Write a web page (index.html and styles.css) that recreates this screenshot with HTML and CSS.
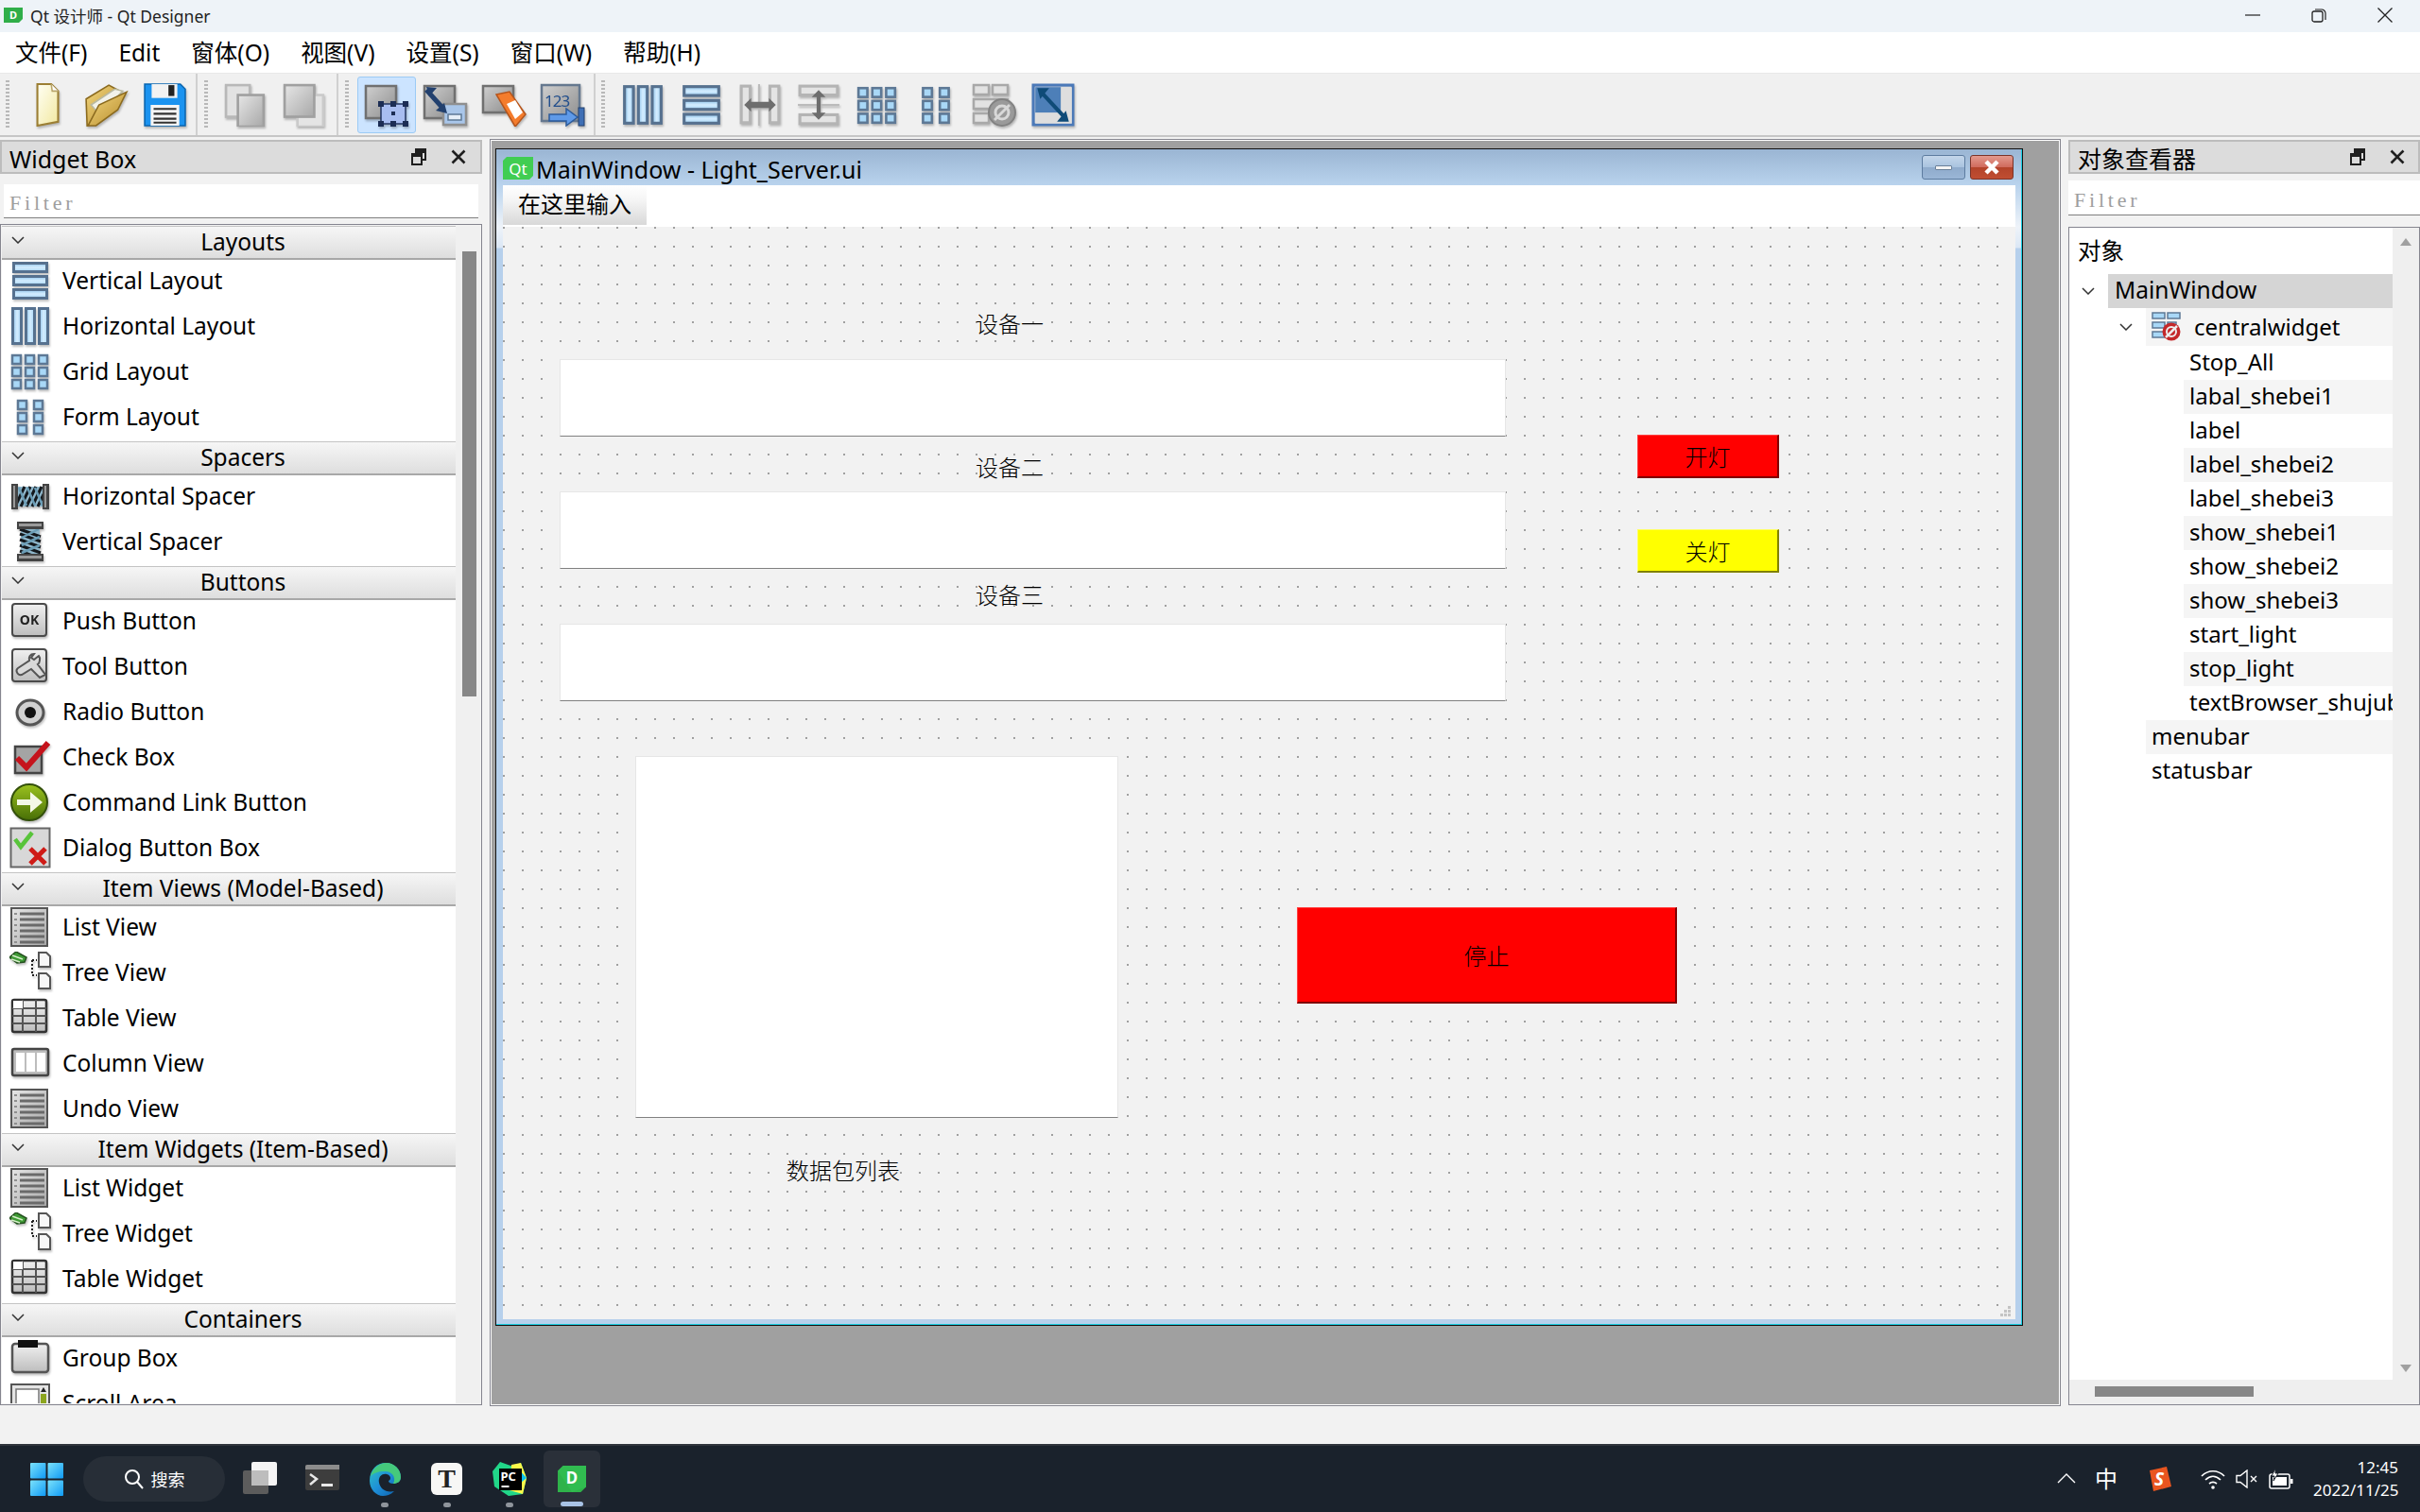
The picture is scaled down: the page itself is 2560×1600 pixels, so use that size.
FILE: index.html
```html
<!DOCTYPE html>
<html lang="zh-CN">
<head>
  <meta charset="UTF-8">
  <title>Qt 设计师 - Qt Designer</title>
  <link rel="stylesheet" href="styles.css">
</head>
<body>
  <svg class="defs" xmlns="http://www.w3.org/2000/svg">
    <defs>
      <linearGradient id="lb" x1="0" y1="0" x2="0" y2="1"><stop offset="0" stop-color="#8fc3ea"/><stop offset=".5" stop-color="#d4edff"/><stop offset="1" stop-color="#a6d4f5"/></linearGradient>
      <linearGradient id="lbh" x1="0" y1="0" x2="1" y2="0"><stop offset="0" stop-color="#8fc3ea"/><stop offset=".5" stop-color="#d4edff"/><stop offset="1" stop-color="#a6d4f5"/></linearGradient>
      <linearGradient id="gr" x1="0" y1="0" x2="0" y2="1"><stop offset="0" stop-color="#f0f0f0"/><stop offset="1" stop-color="#bdbdbd"/></linearGradient>
      <linearGradient id="gd" x1="0" y1="0" x2="1" y2="1"><stop offset="0" stop-color="#cfcfcf"/><stop offset="1" stop-color="#8d8d8d"/></linearGradient>
      <linearGradient id="lg" x1="0" y1="0" x2="1" y2="1"><stop offset="0" stop-color="#e6e6e6"/><stop offset="1" stop-color="#a8a8a8"/></linearGradient>
      <linearGradient id="cream" x1="0" y1="0" x2="1" y2="1"><stop offset="0" stop-color="#fffff4"/><stop offset="1" stop-color="#f2e8a0"/></linearGradient>
      <linearGradient id="fold" x1="0" y1="0" x2="1" y2="1"><stop offset="0" stop-color="#f3d77f"/><stop offset="1" stop-color="#b78c2c"/></linearGradient>
      <linearGradient id="ball" x1="0" y1="0" x2="0" y2="1"><stop offset="0" stop-color="#9bc21f"/><stop offset="1" stop-color="#486f06"/></linearGradient>
      <linearGradient id="edge" x1="0" y1="0" x2="1" y2="1"><stop offset="0" stop-color="#2fc6c0"/><stop offset=".5" stop-color="#1e8fd8"/><stop offset="1" stop-color="#0b5aa8"/></linearGradient>
      <linearGradient id="win" x1="0" y1="0" x2="1" y2="1"><stop offset="0" stop-color="#7be2fb"/><stop offset="1" stop-color="#0f9af5"/></linearGradient>

      <symbol id="i-vbox" viewBox="0 0 44 44">
        <g fill="url(#lb)" stroke="#56718f" stroke-width="3"><rect x="4.500" y="3.500" width="35" height="9"/><rect x="4.500" y="17.500" width="35" height="9"/><rect x="4.500" y="31.500" width="35" height="9"/></g>
      </symbol>
      <symbol id="i-hbox" viewBox="0 0 44 44">
        <g fill="url(#lbh)" stroke="#56718f" stroke-width="3"><rect x="3.500" y="3.500" width="9" height="37"/><rect x="17.500" y="3.500" width="9" height="37"/><rect x="31.500" y="3.500" width="9" height="37"/></g>
      </symbol>
      <symbol id="i-grid" viewBox="0 0 44 44">
        <g fill="#a9d8f7" stroke="#5d7895" stroke-width="2.500">
          <rect x="3" y="5" width="9" height="9"/><rect x="17" y="5" width="9" height="9"/><rect x="31" y="5" width="9" height="9"/>
          <rect x="3" y="18" width="9" height="9"/><rect x="17" y="18" width="9" height="9"/><rect x="31" y="18" width="9" height="9"/>
          <rect x="3" y="31" width="9" height="9"/><rect x="17" y="31" width="9" height="9"/><rect x="31" y="31" width="9" height="9"/>
        </g>
      </symbol>
      <symbol id="i-form" viewBox="0 0 44 44">
        <g fill="#a9d8f7" stroke="#5d7895" stroke-width="2.500">
          <rect x="9" y="5" width="9" height="9"/><rect x="26" y="5" width="9" height="9"/>
          <rect x="9" y="18" width="9" height="9"/><rect x="26" y="18" width="9" height="9"/>
          <rect x="9" y="31" width="9" height="9"/><rect x="26" y="31" width="9" height="9"/>
        </g>
      </symbol>
      <symbol id="i-hspacer" viewBox="0 0 44 44">
        <rect x="9" y="12" width="26" height="21" fill="#8fb6ca"/>
        <path d="M6 33 16 12M12 33 22 12M18 33 28 12M24 33 34 12M30 33 38 16" stroke="#14181c" stroke-width="3" fill="none"/>
        <path d="M10 13 18 32M19 13 27 32M27 13 35 32" stroke="#6b9db6" stroke-width="2.500" fill="none"/>
        <rect x="2" y="9" width="7" height="27" fill="#444"/><rect x="35" y="9" width="7" height="27" fill="#444"/>
        <rect x="4" y="11" width="2" height="23" fill="#9a9a9a"/><rect x="37" y="11" width="2" height="23" fill="#9a9a9a"/>
      </symbol>
      <symbol id="i-vspacer" viewBox="0 0 44 44">
        <rect x="12" y="8" width="20" height="28" fill="#8fb6ca"/>
        <path d="M11 9 33 17M11 14 33 22M11 20 33 28M11 26 33 34M11 32 27 38" stroke="#14181c" stroke-width="3" fill="none"/>
        <path d="M31 9 13 18M32 17 13 26M32 26 13 34" stroke="#6b9db6" stroke-width="2.500" fill="none"/>
        <rect x="8" y="1" width="28" height="8" fill="#444"/><rect x="8" y="35" width="28" height="8" fill="#444"/>
        <rect x="10" y="3" width="24" height="3" fill="#9a9a9a"/><rect x="10" y="37" width="24" height="3" fill="#9a9a9a"/>
      </symbol>
      <symbol id="i-push" viewBox="0 0 44 44">
        <rect x="3" y="4" width="36" height="34" rx="3" fill="url(#gr)" stroke="#4a4a4a" stroke-width="2"/>
        <text x="21" y="26" class="ok-text">OK</text>
      </symbol>
      <symbol id="i-tool" viewBox="0 0 44 44">
        <rect x="3" y="4" width="36" height="34" rx="3" fill="url(#gr)" stroke="#4a4a4a" stroke-width="2"/>
        <path d="M26 9c-4 0-6 3-5 7L9 24c-3 2-1 8 4 7l10-6 9 9 6-3-8-11c2-1 3-7 1-9l-5 4-3-2z" fill="#d9d9d9" stroke="#555" stroke-width="2"/>
      </symbol>
      <symbol id="i-radio" viewBox="0 0 44 44">
        <ellipse cx="22" cy="23" rx="14" ry="13" fill="#d0d0d0" stroke="#555" stroke-width="3"/>
        <circle cx="22" cy="23" r="6" fill="#111"/>
      </symbol>
      <symbol id="i-check" viewBox="0 0 44 44">
        <rect x="6" y="11" width="28" height="28" fill="#a4a4a4" stroke="#444" stroke-width="2.500"/>
        <path d="M8 23 18 33 41 7" fill="none" stroke="#c5131c" stroke-width="6"/>
      </symbol>
      <symbol id="i-cmd" viewBox="0 0 44 44">
        <circle cx="21" cy="22" r="19" fill="url(#ball)" stroke="#33500a" stroke-width="2"/>
        <path d="M8 19h14v-8l13 11-13 11v-8H8z" fill="#f4f8e6"/>
      </symbol>
      <symbol id="i-dialog" viewBox="0 0 44 44">
        <rect x="1.500" y="1.500" width="41" height="41" fill="#d8d8d8" stroke="#666" stroke-width="2"/>
        <path d="M6 13l6 8L24 6" fill="none" stroke="#58c43a" stroke-width="4.500"/>
        <path d="M22 23 38 39M38 23 22 39" fill="none" stroke="#cf1b16" stroke-width="5"/>
      </symbol>
      <symbol id="i-list" viewBox="0 0 44 44">
        <rect x="2" y="2" width="38" height="40" fill="url(#lg)" stroke="#555" stroke-width="2"/>
        <path d="M11 8h26M11 14h26M11 20h26M11 26h26M11 32h26M11 38h26" stroke="#6a6a6a" stroke-width="3"/>
        <path d="M5 8h3M5 14h3M5 20h3M5 26h3M5 32h3M5 38h3" stroke="#8f8f8f" stroke-width="2"/>
      </symbol>
      <symbol id="i-tree" viewBox="0 0 44 44">
        <path d="M0 6 7 0 18 6 16 11 8 12z" fill="#3f9a35" stroke="#24501e" stroke-width="1.500"/>
        <path d="M3 4 14 8M2 8 11 11" stroke="#d5efc8" stroke-width="1.500"/>
        <path d="M24 9h5M24 9v16M24 25h5" stroke="#222" stroke-width="2" stroke-dasharray="2 2" fill="none"/>
        <path d="M31 1h8l4 4v11H31zM31 23h8l4 4v12H31z" fill="#f7f7f7" stroke="#555" stroke-width="2"/>
      </symbol>
      <symbol id="i-table" viewBox="0 0 44 44">
        <rect x="3" y="3" width="36" height="34" rx="2" fill="url(#gr)" stroke="#333" stroke-width="2.500"/>
        <path d="M3 12h36M3 20h36M3 28h36M14 3v34M28 3v34" stroke="#555" stroke-width="2"/>
        <rect x="4" y="4" width="10" height="8" fill="#fff"/>
      </symbol>
      <symbol id="i-column" viewBox="0 0 44 44">
        <rect x="3" y="7" width="38" height="28" rx="2" fill="#bdbdbd" stroke="#444" stroke-width="2.500"/>
        <path d="M7 11h9v20H7zM18 11h9v20h-9zM29 11h9v20h-9z" fill="#fff"/>
      </symbol>
      <symbol id="i-group" viewBox="0 0 44 44">
        <rect x="3" y="7" width="38" height="30" rx="3" fill="url(#gr)" stroke="#555" stroke-width="2.500"/>
        <rect x="9" y="3" width="21" height="8" fill="#111"/>
      </symbol>
      <symbol id="i-scroll" viewBox="0 0 44 44">
        <rect x="2" y="2" width="40" height="40" fill="#e4e4e4" stroke="#555" stroke-width="2"/>
        <rect x="7" y="7" width="24" height="37" fill="#fff" stroke="#777" stroke-width="1.500"/>
        <rect x="33" y="12" width="6" height="30" fill="#8ca51f"/>
        <path d="M36 5 39 10H33z" fill="#222"/>
      </symbol>

      <symbol id="t-new" viewBox="0 0 44 44">
        <path d="M12 1h14l7 7v31l-21 4z" fill="url(#cream)" stroke="#9c7f34" stroke-width="2"/>
        <path d="M26 1l1 7h6" fill="#fff" stroke="#b9a56a" stroke-width="1.500"/>
      </symbol>
      <symbol id="t-open" viewBox="0 0 44 44">
        <path d="M2 16 25 2l11 6L14 40 3 43z" fill="url(#fold)" stroke="#8b6a1e" stroke-width="1.500"/>
        <path d="M7 22 31 6l8 2-23 24z" fill="#f2f2ea" stroke="#b9b9a0" stroke-width="1.500"/>
        <path d="M4 43 15 22 43 9 34 27 12 43z" fill="url(#fold)" stroke="#8b6a1e" stroke-width="1.500"/>
      </symbol>
      <symbol id="t-save" viewBox="0 0 44 44">
        <path d="M2 1h36l5 5v37H2z" fill="#1b93f0" stroke="#0a66b0" stroke-width="1.500"/>
        <rect x="9" y="1" width="26" height="14" fill="#f2f2f2"/><rect x="26" y="2" width="6" height="11" fill="#222"/>
        <rect x="8" y="22" width="29" height="21" fill="#f5f5f5"/>
        <path d="M11 26h23M11 31h23M11 36h23M11 40h23" stroke="#333" stroke-width="2"/>
      </symbol>
      <symbol id="t-copy" viewBox="0 0 44 44">
        <rect x="2" y="2" width="24" height="32" fill="#e2e2e2" stroke="#b8b8b8" stroke-width="2.500"/>
        <rect x="14" y="12" width="26" height="32" fill="url(#lg)" stroke="#a0a0a0" stroke-width="2.500"/>
      </symbol>
      <symbol id="t-paste" viewBox="0 0 44 44">
        <rect x="15" y="12" width="26" height="32" fill="#e4e4e4" stroke="#cacaca" stroke-width="2.500"/>
        <rect x="2" y="2" width="30" height="32" fill="url(#lg)" stroke="#a0a0a0" stroke-width="2.500"/>
      </symbol>
      <symbol id="t-edit" viewBox="0 0 48 46">
        <rect x="2" y="3" width="32" height="34" fill="url(#gd)" stroke="#707070" stroke-width="2.500"/>
        <rect x="18" y="22" width="26" height="21" fill="#a8bdf0" stroke="#22355f" stroke-width="1.500"/>
        <g fill="#1c2d54"><rect x="15" y="19" width="6" height="6"/><rect x="41" y="19" width="6" height="6"/><rect x="15" y="40" width="6" height="6"/><rect x="41" y="40" width="6" height="6"/><rect x="28" y="19" width="6" height="6"/><rect x="28" y="40" width="6" height="6"/><rect x="29" y="30" width="4" height="4"/></g>
      </symbol>
      <symbol id="t-signal" viewBox="0 0 48 46">
        <rect x="2" y="3" width="32" height="34" fill="url(#gd)" stroke="#707070" stroke-width="2.500"/>
        <rect x="22" y="22" width="24" height="22" fill="#a9c6ea" stroke="#8f8f8f" stroke-width="2.500"/>
        <rect x="27" y="33" width="14" height="6" fill="#e6eef8" stroke="#5d7895" stroke-width="1.500"/>
        <path d="M4 7 22 27" stroke="#22406e" stroke-width="5"/>
        <path d="M4 4l11 1-8 9zM26 32 14 29l9-8z" fill="#22406e"/>
      </symbol>
      <symbol id="t-buddy" viewBox="0 0 48 46">
        <rect x="2" y="3" width="32" height="28" fill="url(#gd)" stroke="#707070" stroke-width="2.500"/>
        <path d="M16 12 30 9l17 24-11 13z" fill="#f47c2c" stroke="#b5551c" stroke-width="1.500"/>
        <path d="M27 22l9-4 8 13-8 7z" fill="#fff"/>
      </symbol>
      <symbol id="t-tab" viewBox="0 0 48 46">
        <rect x="2" y="2" width="40" height="38" fill="url(#gd)" stroke="#65788f" stroke-width="2.500"/>
        <text x="5" y="25" class="tab-text">123</text>
        <path d="M10 33h18v-6l12 9-12 9v-5H10z" fill="#5f9ae8" stroke="#2d5b9a" stroke-width="1.500"/>
        <rect x="41" y="26" width="6" height="19" fill="#3f6fb5" stroke="#22406e"/>
      </symbol>
      <symbol id="t-hsplit" viewBox="0 0 44 44">
        <g fill="#e4e4e4" stroke="#b4b4b4" stroke-width="3"><rect x="3" y="3" width="9" height="37"/><rect x="32" y="3" width="9" height="37"/></g>
        <rect x="20" y="1" width="2" height="42" fill="#bbb"/>
        <path d="M6 22 13 15v4h18v-4l7 7-7 7v-4H13v4z" fill="#6d6d6d"/>
      </symbol>
      <symbol id="t-vsplit" viewBox="0 0 44 44">
        <g fill="#e4e4e4" stroke="#b4b4b4" stroke-width="3"><rect x="3" y="3" width="38" height="9"/><rect x="3" y="32" width="38" height="9"/></g>
        <rect x="1" y="21" width="42" height="2" fill="#bbb"/>
        <path d="M22 7l7 7h-5v16h5l-7 7-7-7h5V14h-5z" fill="#6d6d6d"/>
      </symbol>
      <symbol id="t-break" viewBox="0 0 48 46">
        <g fill="#e2e2e2" stroke="#a8a8a8" stroke-width="2.500"><rect x="2" y="2" width="16" height="10"/><rect x="22" y="2" width="16" height="10"/><rect x="2" y="17" width="36" height="10"/><rect x="2" y="32" width="16" height="10"/></g>
        <circle cx="32" cy="31" r="14" fill="#9a9a9a" stroke="#828282" stroke-width="2"/>
        <path d="M24 39 40 23" stroke="#d8d8d8" stroke-width="3"/><circle cx="32" cy="31" r="7" fill="none" stroke="#d8d8d8" stroke-width="3"/>
      </symbol>
      <symbol id="t-adjust" viewBox="0 0 44 44">
        <rect x="2" y="2" width="40" height="40" fill="#dcdcdc" stroke="#4b79b8" stroke-width="3"/>
        <path d="M4 4h26v26H4z" fill="#4d7fb8"/>
        <path d="M4 30h26V4h11v37H4z" fill="#dedede"/>
        <path d="M9 8 35 36" stroke="#0f4b78" stroke-width="4"/>
        <path d="M6 5h12l-9 11zM38 39H26l9-11z" fill="#0f4b78"/>
      </symbol>

      <symbol id="s-float" viewBox="0 0 16 18">
        <path d="M5 5V1h10v11h-4" fill="none" stroke="#1f1f1f" stroke-width="2"/><path d="M5 2h10v3H5z" fill="#1f1f1f"/>
        <rect x="1" y="6" width="10" height="11" fill="none" stroke="#1f1f1f" stroke-width="2"/><path d="M1 6h10v3H1z" fill="#1f1f1f"/>
      </symbol>
      <symbol id="s-close" viewBox="0 0 16 16"><path d="M1.500 1.500 14.500 14.500M14.500 1.500 1.500 14.500" stroke="#1f1f1f" stroke-width="2.600"/></symbol>
      <symbol id="s-chev" viewBox="0 0 14 8"><path d="M1 1 7 7 13 1" fill="none" stroke="#333" stroke-width="1.500"/></symbol>
    </defs>
  </svg>

  <div class="app">
    <div class="titlebar">
      <svg class="title-icon" viewBox="0 0 20 16"><path d="M0 0h20v12l-4 4H0z" fill="#2fae49"/><text x="10" y="12" class="d-text">D</text></svg>
      <span class="title-text">Qt 设计师 - Qt Designer</span>
      <div class="win-ctrls">
        <svg class="win-ctrl" viewBox="0 0 16 16"><path d="M0 8h16" stroke="#222" stroke-width="1.200"/></svg>
        <svg class="win-ctrl" viewBox="0 0 16 16"><rect x="1" y="4" width="11" height="11" rx="2" fill="none" stroke="#222" stroke-width="1.300"/><path d="M4 2h7c2 0 4 2 4 4v7" fill="none" stroke="#222" stroke-width="1.200"/></svg>
        <svg class="win-ctrl" viewBox="0 0 16 16"><path d="M0.500 0.500 15.500 15.500M15.500 0.500 0.500 15.500" stroke="#222" stroke-width="1.300"/></svg>
      </div>
    </div>

    <nav class="menubar">
      <span>文件(F)</span><span>Edit</span><span>窗体(O)</span><span>视图(V)</span><span>设置(S)</span><span>窗口(W)</span><span>帮助(H)</span>
    </nav>

    <div class="toolbar">
      <div class="tool-group g1">
        <i class="grip"></i>
        <div class="tool"><svg class="ic tb"><use href="#t-new"/></svg></div>
        <div class="tool"><svg class="ic tb"><use href="#t-open"/></svg></div>
        <div class="tool"><svg class="ic tb"><use href="#t-save"/></svg></div>
      </div>
      <div class="tool-group g2">
        <i class="grip"></i>
        <div class="tool"><svg class="ic tb"><use href="#t-copy"/></svg></div>
        <div class="tool"><svg class="ic tb"><use href="#t-paste"/></svg></div>
      </div>
      <div class="tool-group g3">
        <i class="grip"></i>
        <div class="tool active"><svg class="ic tb"><use href="#t-edit"/></svg></div>
        <div class="tool"><svg class="ic tb"><use href="#t-signal"/></svg></div>
        <div class="tool"><svg class="ic tb"><use href="#t-buddy"/></svg></div>
        <div class="tool"><svg class="ic tb"><use href="#t-tab"/></svg></div>
      </div>
      <div class="tool-group g4">
        <i class="grip"></i>
        <div class="tool"><svg class="ic tb"><use href="#i-hbox"/></svg></div>
        <div class="tool"><svg class="ic tb"><use href="#i-vbox"/></svg></div>
        <div class="tool"><svg class="ic tb"><use href="#t-hsplit"/></svg></div>
        <div class="tool"><svg class="ic tb"><use href="#t-vsplit"/></svg></div>
        <div class="tool"><svg class="ic tb"><use href="#i-grid"/></svg></div>
        <div class="tool"><svg class="ic tb"><use href="#i-form"/></svg></div>
        <div class="tool"><svg class="ic tb"><use href="#t-break"/></svg></div>
        <div class="tool"><svg class="ic tb"><use href="#t-adjust"/></svg></div>
      </div>
    </div>

    <div class="workspace">
      <!-- Widget Box -->
      <aside class="dock dock-left">
        <div class="dock-title">
          <span>Widget Box</span>
          <svg class="dock-btn"><use href="#s-float"/></svg>
          <svg class="dock-btn last"><use href="#s-close"/></svg>
        </div>
        <div class="filter left-filter">Filter</div>
        <div class="box-frame">
          <div class="box-list">
            <div class="cat"><svg class="chev"><use href="#s-chev"/></svg><span>Layouts</span></div>
            <div class="item"><svg class="ic"><use href="#i-vbox"/></svg>Vertical Layout</div>
            <div class="item"><svg class="ic"><use href="#i-hbox"/></svg>Horizontal Layout</div>
            <div class="item"><svg class="ic"><use href="#i-grid"/></svg>Grid Layout</div>
            <div class="item"><svg class="ic"><use href="#i-form"/></svg>Form Layout</div>
            <div class="cat"><svg class="chev"><use href="#s-chev"/></svg><span>Spacers</span></div>
            <div class="item"><svg class="ic"><use href="#i-hspacer"/></svg>Horizontal Spacer</div>
            <div class="item"><svg class="ic"><use href="#i-vspacer"/></svg>Vertical Spacer</div>
            <div class="cat"><svg class="chev"><use href="#s-chev"/></svg><span>Buttons</span></div>
            <div class="item"><svg class="ic"><use href="#i-push"/></svg>Push Button</div>
            <div class="item"><svg class="ic"><use href="#i-tool"/></svg>Tool Button</div>
            <div class="item"><svg class="ic"><use href="#i-radio"/></svg>Radio Button</div>
            <div class="item"><svg class="ic"><use href="#i-check"/></svg>Check Box</div>
            <div class="item"><svg class="ic"><use href="#i-cmd"/></svg>Command Link Button</div>
            <div class="item"><svg class="ic flat"><use href="#i-dialog"/></svg>Dialog Button Box</div>
            <div class="cat"><svg class="chev"><use href="#s-chev"/></svg><span>Item Views (Model-Based)</span></div>
            <div class="item"><svg class="ic flat"><use href="#i-list"/></svg>List View</div>
            <div class="item"><svg class="ic"><use href="#i-tree"/></svg>Tree View</div>
            <div class="item"><svg class="ic"><use href="#i-table"/></svg>Table View</div>
            <div class="item"><svg class="ic"><use href="#i-column"/></svg>Column View</div>
            <div class="item"><svg class="ic flat"><use href="#i-list"/></svg>Undo View</div>
            <div class="cat"><svg class="chev"><use href="#s-chev"/></svg><span>Item Widgets (Item-Based)</span></div>
            <div class="item"><svg class="ic flat"><use href="#i-list"/></svg>List Widget</div>
            <div class="item"><svg class="ic"><use href="#i-tree"/></svg>Tree Widget</div>
            <div class="item"><svg class="ic"><use href="#i-table"/></svg>Table Widget</div>
            <div class="cat"><svg class="chev"><use href="#s-chev"/></svg><span>Containers</span></div>
            <div class="item"><svg class="ic"><use href="#i-group"/></svg>Group Box</div>
            <div class="item"><svg class="ic flat"><use href="#i-scroll"/></svg>Scroll Area</div>
          </div>
          <div class="box-scroll"><div class="box-thumb"></div></div>
        </div>
      </aside>

      <!-- MDI area with the form being edited -->
      <main class="mdi">
        <div class="subwin">
          <div class="sub-title">
            <svg class="qt-logo" viewBox="0 0 32 24"><path d="M4 0h28v20l-4 4H0V4z" fill="#41cd52"/><text x="16" y="18.500" class="qt-text">Qt</text></svg>
            <span class="sub-name">MainWindow - Light_Server.ui</span>
            <div class="sub-btn min"><i></i></div>
            <div class="sub-btn close"><svg viewBox="0 0 18 16"><path d="M3 2 15 14M15 2 3 14" stroke="#fff" stroke-width="4.500"/></svg></div>
          </div>
          <div class="sub-menu"><span>在这里输入</span></div>
          <div class="canvas">
            <span class="lbl lbl1">设备一</span>
            <div class="field f1"></div>
            <span class="lbl lbl2">设备二</span>
            <div class="field f2"></div>
            <span class="lbl lbl3">设备三</span>
            <div class="field f3"></div>
            <div class="btn red b-on">开灯</div>
            <div class="btn yellow b-off">关灯</div>
            <div class="field browser"></div>
            <div class="btn red b-stop">停止</div>
            <span class="lbl lbl4">数据包列表</span>
            <svg class="grip-corner" viewBox="0 0 12 12"><path d="M8 0h3v3H8zM4 4h3v3H4zM8 4h3v3H8zM0 8h3v3H0zM4 8h3v3H4zM8 8h3v3H8z" fill="#c4c4c4"/></svg>
          </div>
        </div>
      </main>

      <!-- Object inspector -->
      <aside class="dock dock-right">
        <div class="dock-title">
          <span class="ins-name">对象查看器</span>
          <svg class="dock-btn"><use href="#s-float"/></svg>
          <svg class="dock-btn last-r"><use href="#s-close"/></svg>
        </div>
        <div class="filter right-filter">Filter</div>
        <div class="tree-frame">
          <div class="tree-main">
            <div class="tree-rows">
              <div class="tree-head">对象</div>
              <div class="row"><div class="ind w40"><svg class="chev"><use href="#s-chev"/></svg></div><div class="cell selected">MainWindow</div></div>
              <div class="row tall"><div class="ind w80"><svg class="chev"><use href="#s-chev"/></svg></div><div class="cell alt central"><svg class="tree-ic" viewBox="0 0 32 32"><g fill="#a9d8f7" stroke="#5d7895" stroke-width="1.500"><path d="M1 1h13v6H1zM17 1h13v6H17zM1 11h13v6H1zM17 11h9v6h-9zM1 21h13v6H1z"/></g><circle cx="21" cy="21" r="9.500" fill="#c4282a"/><path d="M15 27 27 15" stroke="#eee" stroke-width="2.500"/><circle cx="21" cy="21" r="5" fill="none" stroke="#eee" stroke-width="2"/></svg>centralwidget</div></div>
              <div class="row"><div class="ind w120"></div><div class="cell">Stop_All</div></div>
              <div class="row"><div class="ind w120"></div><div class="cell alt">labal_shebei1</div></div>
              <div class="row"><div class="ind w120"></div><div class="cell">label</div></div>
              <div class="row"><div class="ind w120"></div><div class="cell alt">label_shebei2</div></div>
              <div class="row"><div class="ind w120"></div><div class="cell">label_shebei3</div></div>
              <div class="row"><div class="ind w120"></div><div class="cell alt">show_shebei1</div></div>
              <div class="row"><div class="ind w120"></div><div class="cell">show_shebei2</div></div>
              <div class="row"><div class="ind w120"></div><div class="cell alt">show_shebei3</div></div>
              <div class="row"><div class="ind w120"></div><div class="cell">start_light</div></div>
              <div class="row"><div class="ind w120"></div><div class="cell alt">stop_light</div></div>
              <div class="row"><div class="ind w120"></div><div class="cell">textBrowser_shujubao</div></div>
              <div class="row"><div class="ind w80"></div><div class="cell alt top">menubar</div></div>
              <div class="row"><div class="ind w80"></div><div class="cell top">statusbar</div></div>
            </div>
            <div class="tree-vscroll"><i class="arrow up"></i><i class="arrow down"></i></div>
          </div>
          <div class="tree-hscroll"><div class="h-thumb"></div></div>
        </div>
      </aside>
    </div>

    <footer class="taskbar">
      <svg class="start" viewBox="0 0 35 35"><g fill="url(#win)"><rect width="16.500" height="16.500" rx="1"/><rect x="18.500" width="16.500" height="16.500" rx="1"/><rect y="18.500" width="16.500" height="16.500" rx="1"/><rect x="18.500" y="18.500" width="16.500" height="16.500" rx="1"/></g></svg>
      <div class="search">
        <svg viewBox="0 0 22 22"><circle cx="9" cy="9" r="7" fill="none" stroke="#fff" stroke-width="2"/><path d="M14 14 20 21" stroke="#fff" stroke-width="2"/></svg>
        <span>搜索</span>
      </div>
      <div class="task">
        <svg viewBox="0 0 36 36"><rect x="0" y="9" width="27" height="25" rx="2" fill="#5c5c5c"/><rect x="9" y="0" width="27" height="25" rx="2" fill="#f4f4f4"/><rect x="9" y="9" width="18" height="16" fill="#bdbdbd"/></svg>
      </div>
      <div class="task">
        <svg viewBox="0 0 36 36"><rect y="3" width="36" height="27" rx="2" fill="#3d3d3d"/><path d="M0 5q0-2 2-2h34v5H0z" fill="#8c8c8c"/><path d="M5 13l7 5-7 6" fill="none" stroke="#e8e8e8" stroke-width="2.500"/><rect x="17" y="23" width="12" height="3" fill="#e8e8e8"/></svg>
      </div>
      <div class="task open">
        <svg viewBox="0 0 36 36"><path d="M2 20C2 8 10 1 19 1c9 0 16 7 16 15 0 5-4 7-8 7-3 0-5-1-5-3 3-1 3-6-2-7-6-1-9 4-8 9 1 6 7 11 16 9-4 4-8 5-12 5C9 36 2 29 2 20z" fill="url(#edge)"/><path d="M3 15C6 6 13 1 20 1c8 0 15 7 15 15 0 5-4 7-8 7 4-8-3-14-10-13-6 0-11 2-14 5z" fill="#45c97c"/></svg>
      </div>
      <div class="task open">
        <svg viewBox="0 0 36 36"><rect x="1" y="1" width="33" height="34" rx="6" fill="#f7f7f5"/><text x="17.500" y="27" class="typora-text">T</text></svg>
      </div>
      <div class="task open">
        <svg viewBox="0 0 36 36"><path d="M8 0 22 5 30 1 36 17 32 34 17 36 2 26 0 10z" fill="#21d789"/><path d="M20 3 30 1 36 17 32 34 18 30z" fill="#fcf84a"/><path d="M28 8 36 17 30 22z" fill="#07c3f2"/><rect x="7" y="7" width="24" height="23" fill="#000"/><text x="8.500" y="20" class="pc-text">PC</text><rect x="9.500" y="25" width="8" height="2" fill="#fff"/></svg>
      </div>
      <div class="task active">
        <svg viewBox="0 0 32 32"><path d="M0 8 6 2h26v24l-6 6H0z" fill="#2fb34a"/><path d="M0 8 6 2h26v24L16 32z" fill="#34c255" opacity=".6"/><text x="16" y="22" class="d2-text">D</text></svg>
      </div>
      <div class="tray">
        <svg class="tray-chev" viewBox="0 0 20 12"><path d="M1 10 10 1 19 10" fill="none" stroke="#fff" stroke-width="1.400"/></svg>
        <span class="ime">中</span>
        <svg class="sogou" viewBox="0 0 26 26"><path d="M3 4 21 0l5 21-19 5z" fill="#e9551f"/><text x="13" y="20" class="sogou-text">S</text></svg>
        <svg class="wifi" viewBox="0 0 26 22"><g fill="none" stroke="#fff" stroke-width="1.700"><path d="M1 8c7-7 17-7 24 0"/><path d="M5 12c5-5 11-5 16 0"/><path d="M9 16c3-2.500 5-2.500 8 0"/></g><circle cx="13" cy="20" r="1.800" fill="#fff"/></svg>
        <svg class="vol" viewBox="0 0 24 20"><path d="M1 6.500h4L12 1v18l-7-5.500H1z" fill="none" stroke="#fff" stroke-width="1.400"/><path d="M16 7l6 6M22 7l-6 6" stroke="#fff" stroke-width="1.400"/></svg>
        <svg class="batt" viewBox="0 0 26 22"><rect x="1" y="6" width="21" height="15" rx="2" fill="none" stroke="#fff" stroke-width="1.500"/><rect x="4" y="9" width="15" height="9" fill="#fff"/><rect x="23" y="11" width="2.500" height="5" fill="#fff"/><path d="M7 0 3 8h3l-1 5 5-8H7z" fill="#fff" stroke="#1a222c"/></svg>
        <div class="clock"><div>12:45</div><div>2022/11/25</div></div>
      </div>
    </footer>
  </div>
</body>
</html>
```

FILE: styles.css
```css
* {
  box-sizing: border-box;
}
html, body {
  margin: 0;
  padding: 0;
}
body {
  font-family: "Noto Sans", "Noto Sans CJK SC", sans-serif;
  font-size: 24.500px;
  color: #000;
  background: #f2f2f2;
}
.defs {
  display: block;
  width: 0;
  height: 0;
}
.app {
  width: 2560px;
  height: 1600px;
  display: flex;
  flex-direction: column;
  overflow: hidden;
}

/* window chrome */
.titlebar {
  height: 34px;
  flex: none;
  background: #eef3f8;
  display: flex;
  align-items: center;
  padding: 0 0 2px 4px;
}
.title-icon {
  width: 20px;
  height: 16px;
}
.d-text {
  font: bold 11px "Noto Sans", sans-serif;
  fill: #fff;
  text-anchor: middle;
}
.title-text {
  margin-left: 8px;
  font-size: 17.500px;
  color: #222;
}
.win-ctrls {
  margin-left: auto;
  display: flex;
  gap: 54px;
  padding-right: 29px;
}
.win-ctrl {
  width: 16px;
  height: 16px;
}
.menubar {
  height: 43px;
  flex: none;
  background: #fff;
  display: flex;
  align-items: center;
  gap: 33px;
  padding-left: 16px;
  line-height: 42px;
}

.toolbar {
  height: 68px;
  flex: none;
  display: flex;
  background: #f0f0f0;
  border-top: 1px solid #e8e8e8;
  border-bottom: 2px solid #c6c6c6;
}
.tool-group {
  display: flex;
  align-items: center;
  border-right: 2px solid #d0d0d0;
}
.g1 { width: 209px; }
.g2 { width: 149px; padding-left: 1px; }
.g3 { width: 272px; padding-left: 1px; }
.g4 { flex: 1; border-right: 0; }
.grip {
  width: 4px;
  height: 52px;
  margin: 0 9px 0 6px;
  background: repeating-linear-gradient(#b8b8b8 0 2px, transparent 2px 4px);
}
.tool {
  width: 62px;
  height: 60px;
  display: flex;
  align-items: center;
  justify-content: center;
  border: 1px solid transparent;
  border-radius: 3px;
}
.tool.active {
  background: #cce4ff;
  border-color: #9ccbf5;
}
.ic {
  width: 44px;
  height: 44px;
  flex: none;
  filter: drop-shadow(1px 2px 1px rgba(0, 0, 0, .25));
}
.ic.flat {
  filter: none;
}
.ic.tb {
  width: 48px;
  height: 46px;
}
.ok-text {
  font: bold 14px "Noto Sans", sans-serif;
  text-anchor: middle;
  fill: #222;
}
.tab-text {
  font: 17px "Noto Sans", sans-serif;
  fill: #234f8c;
  letter-spacing: -1px;
}

/* main area */
.workspace {
  flex: 1;
  min-height: 0;
  display: flex;
  padding: 2px 0 41px;
  background: #f2f2f2;
}
.dock {
  display: flex;
  flex-direction: column;
  flex: none;
}
.dock-left {
  width: 510px;
}
.dock-right {
  width: 372px;
  margin-left: 8px;
}
.dock-title {
  height: 36px;
  flex: none;
  margin-top: 1px;
  display: flex;
  align-items: center;
  padding-left: 8px;
  background: #dcdcdc;
  border: 2px solid #bcbcbc;
  font-size: 25px;
  line-height: 30px;
}
.dock-title span {
  flex: 1;
  padding-top: 3px;
}
.dock-btn {
  width: 16px;
  height: 18px;
  margin-right: 26px;
}
.dock-btn.last {
  margin-right: 15px;
}
.dock-btn.last-r {
  margin-right: 14px;
}
.filter {
  flex: none;
  background: #fff;
  border-bottom: 1px solid #808080;
  font-family: "Liberation Serif", serif;
  font-size: 22px;
  letter-spacing: 3.800px;
  color: #9e9e9e;
  display: flex;
  align-items: center;
  padding: 5px 0 0 6px;
}
.left-filter {
  height: 36px;
  margin: 11px 4px 0 4px;
}
.right-filter {
  height: 37px;
  margin-top: 7px;
}

/* widget box */
.box-frame {
  flex: 1;
  min-height: 0;
  margin-top: 6px;
  border: 1px solid #85858f;
  padding: 1px;
  display: flex;
  overflow: hidden;
}
.box-list {
  width: 480px;
  flex: none;
  background: #fff;
  overflow: hidden;
}
.box-scroll {
  flex: 1;
  background: #f0f0f0;
  padding: 27px 4px 0 7px;
}
.box-thumb {
  height: 471px;
  background: #878787;
}
.cat {
  height: 36px;
  display: flex;
  align-items: center;
  justify-content: center;
  position: relative;
  padding: 0 0 2px 30px;
  background: linear-gradient(#f6f6f6, #dedede);
  border-top: 1px solid #c4c4c4;
  border-bottom: 2px solid #a8a8a8;
  line-height: 31px;
}
.chev {
  width: 14px;
  height: 8px;
}
.cat .chev {
  position: absolute;
  left: 10px;
  top: 10px;
}
.item {
  height: 48px;
  display: flex;
  align-items: center;
  padding: 0 0 4px 8px;
  gap: 12px;
  line-height: 44px;
  white-space: nowrap;
}

/* mdi + sub window */
.mdi {
  flex: none;
  width: 1660px;
  margin: 1px 1px 0 9px;
  background: #a0a0a0;
  border: 1px solid #fff;
  box-shadow: 0 0 0 1px #85858f;
  position: relative;
}
.subwin {
  position: absolute;
  left: 4px;
  top: 8px;
  width: 1616px;
  height: 1246px;
  padding: 0 7px 6px;
  border: 1px solid #111;
  box-shadow: inset -1px -1px 0 #1ad0e4;
  background: linear-gradient(#9ab5d3 0, #b9d3ed 38px, #eef3f9 82px, #dbe7f5 104px, #b6d0ec 105px);
  display: flex;
  flex-direction: column;
}
.sub-title {
  height: 38px;
  flex: none;
  display: flex;
  align-items: center;
  font-size: 25px;
  line-height: 38px;
}
.qt-logo {
  width: 32px;
  height: 24px;
  margin-top: 2px;
}
.qt-text {
  font: 17px "Noto Sans", sans-serif;
  fill: #fff;
  text-anchor: middle;
}
.sub-name {
  margin-left: 3px;
  padding-top: 3px;
  flex: 1;
}
.sub-btn {
  width: 46px;
  height: 26px;
  margin: 0 2px 0 3px;
  border: 1px solid #5d7ca0;
  border-radius: 3px;
  display: flex;
  align-items: center;
  justify-content: center;
}
.sub-btn.min {
  background: linear-gradient(#c4d6ea 0, #a9c3df 50%, #8fabcc 51%, #9ab6d6 100%);
}
.sub-btn.min i {
  width: 18px;
  height: 5px;
  background: #f4f4f4;
  border: 1px solid #6a7f98;
  border-radius: 1px;
}
.sub-btn.close {
  background: linear-gradient(#e39a8e 0, #d06a5c 50%, #b3432a 51%, #c04e32 100%);
  border-color: #7a3328;
}
.sub-btn.close svg {
  width: 18px;
  height: 16px;
}
.sub-menu {
  height: 44px;
  flex: none;
  background: #fff;
}
.sub-menu span {
  display: block;
  width: 152px;
  height: 42px;
  padding-left: 16px;
  font-size: 24px;
  line-height: 40px;
  background: linear-gradient(#fff 0, #f4f4f4 40%, #d8d8d8 100%);
}
.canvas {
  flex: 1;
  position: relative;
  background-color: #a0a0a0;
  background-image:
    linear-gradient(90deg, transparent 2px, #f2f2f2 2px),
    linear-gradient(transparent 2px, #f2f2f2 2px);
  background-size: 20px 20px;
}
/* form widgets sit at their own coordinates on the form */
.lbl {
  position: absolute;
  left: 500px;
  font-size: 24px;
  font-weight: 300;
  line-height: 34px;
  color: #000;
  white-space: nowrap;
}
.lbl1 { top: 86px; }
.lbl2 { top: 238px; }
.lbl3 { top: 373px; }
.lbl4 { left: 300px; top: 982px; }
.field {
  position: absolute;
  left: 60px;
  width: 1001px;
  height: 82px;
  background: #fff;
  border: 1px solid #e6e6e6;
  border-bottom-color: #808080;
}
.f1 { top: 140px; }
.f2 { top: 280px; }
.f3 { top: 420px; }
.field.browser {
  left: 140px;
  top: 560px;
  width: 511px;
  height: 383px;
}
.btn {
  position: absolute;
  display: flex;
  align-items: center;
  justify-content: center;
  font-size: 24px;
  font-weight: 300;
  color: #000;
  border-top: 1px solid;
  border-left: 1px solid;
  border-right: 2px solid;
  border-bottom: 2px solid;
}
.btn.red {
  background: #f00;
  border-color: #ff4040 #800000 #800000 #ff4040;
}
.btn.yellow {
  background: #ff0;
  border-color: #ffff60 #808000 #808000 #ffff60;
}
.b-on { left: 1200px; top: 220px; width: 150px; height: 46px; }
.b-off { left: 1200px; top: 320px; width: 150px; height: 46px; }
.b-stop { left: 840px; top: 720px; width: 402px; height: 102px; }
.grip-corner {
  position: absolute;
  right: 4px;
  bottom: 2px;
  width: 12px;
  height: 12px;
}

/* object inspector */
.tree-frame {
  flex: 1;
  min-height: 0;
  margin-top: 12px;
  border: 1px solid #85858f;
  display: flex;
  flex-direction: column;
  background: #fff;
  overflow: hidden;
}
.tree-main {
  flex: 1;
  min-height: 0;
  display: flex;
}
.tree-rows {
  width: 342px;
  flex: none;
  padding-left: 1px;
  overflow: hidden;
}
.tree-head {
  height: 49px;
  line-height: 50px;
  padding-left: 8px;
}
.row {
  height: 36px;
  display: flex;
  font-size: 24px;
  line-height: 34px;
}
.row.tall {
  height: 40px;
  line-height: 38px;
}
.ind {
  flex: none;
  display: flex;
  align-items: center;
  justify-content: flex-end;
}
.ind .chev {
  margin-right: 14px;
}
.w40 { width: 40px; }
.w80 { width: 80px; }
.w120 { width: 120px; }
.cell {
  flex: 1;
  padding-left: 6px;
  white-space: nowrap;
  overflow: hidden;
}
.cell.selected {
  padding-left: 7px;
  font-size: 24.500px;
  background: #d5d5d5;
}
.cell.alt {
  background: #f5f5f5;
}
.cell.central {
  display: flex;
  align-items: center;
}
.tree-ic {
  width: 32px;
  height: 32px;
  margin-right: 13px;
  flex: none;
}
.tree-vscroll {
  flex: 1;
  background: #efefef;
  display: flex;
  flex-direction: column;
  align-items: center;
  justify-content: space-between;
  padding: 11px 0 8px;
}
.arrow {
  width: 0;
  height: 0;
  border-left: 6px solid transparent;
  border-right: 6px solid transparent;
}
.arrow.up {
  border-bottom: 8px solid #a0a0a0;
}
.arrow.down {
  border-top: 8px solid #a0a0a0;
}
.tree-hscroll {
  height: 26px;
  flex: none;
  background: #efefef;
  padding: 7px 0 0 27px;
}
.h-thumb {
  width: 168px;
  height: 11px;
  background: #878787;
}

/* taskbar */
.taskbar {
  height: 72px;
  flex: none;
  background: #1a222c;
  border-top: 2px solid #2f343c;
  display: flex;
  align-items: center;
  padding-left: 32px;
  color: #fff;
}
.start {
  width: 35px;
  height: 35px;
  flex: none;
}
.search {
  width: 150px;
  height: 48px;
  margin-left: 21px;
  border-radius: 24px;
  background: #272e37;
  display: flex;
  align-items: center;
  justify-content: center;
  gap: 7px;
  font-size: 18px;
}
.search svg {
  width: 22px;
  height: 22px;
}
.task {
  width: 66px;
  height: 60px;
  display: flex;
  align-items: center;
  justify-content: center;
  position: relative;
  flex: none;
}
.search + .task {
  margin-left: 4px;
}
.task svg {
  width: 36px;
  height: 36px;
}
.task.open::after {
  content: "";
  position: absolute;
  left: 29px;
  bottom: 0;
  width: 8px;
  height: 5px;
  border-radius: 3px;
  background: #8f959c;
}
.task.active::before {
  content: "";
  position: absolute;
  left: 3px;
  right: 3px;
  top: 0;
  bottom: 0;
  background: #2a3039;
  border-radius: 6px;
}
.task.active::after {
  content: "";
  position: absolute;
  left: 21px;
  bottom: 1px;
  width: 24px;
  height: 5px;
  border-radius: 3px;
  background: #a8c3e6;
}
.task.active svg {
  position: relative;
  width: 30px;
  height: 30px;
  margin-top: -3px;
}
.typora-text {
  font: bold 28px "Liberation Serif", serif;
  fill: #222;
  text-anchor: middle;
}
.pc-text {
  font: bold 13px "Noto Sans", sans-serif;
  fill: #fff;
}
.d2-text {
  font: bold 18px "Noto Sans", sans-serif;
  fill: #fff;
  text-anchor: middle;
}
.tray {
  margin-left: auto;
  display: flex;
  align-items: center;
  padding-right: 23px;
}
.tray-chev {
  width: 20px;
  height: 12px;
}
.ime {
  width: 24px;
  margin-left: 20px;
  font-size: 24px;
  line-height: 30px;
}
.sogou {
  width: 26px;
  height: 26px;
  margin-left: 31px;
}
.sogou-text {
  font: italic bold 19px "Noto Sans", sans-serif;
  fill: #fff;
  text-anchor: middle;
}
.wifi {
  width: 26px;
  height: 22px;
  margin-left: 31px;
}
.vol {
  width: 24px;
  height: 20px;
  margin-left: 11px;
}
.batt {
  width: 26px;
  height: 24px;
  margin-left: 11px;
}
.clock {
  width: 90px;
  margin-left: 21px;
  text-align: right;
  font-size: 17px;
  line-height: 24px;
}
```
